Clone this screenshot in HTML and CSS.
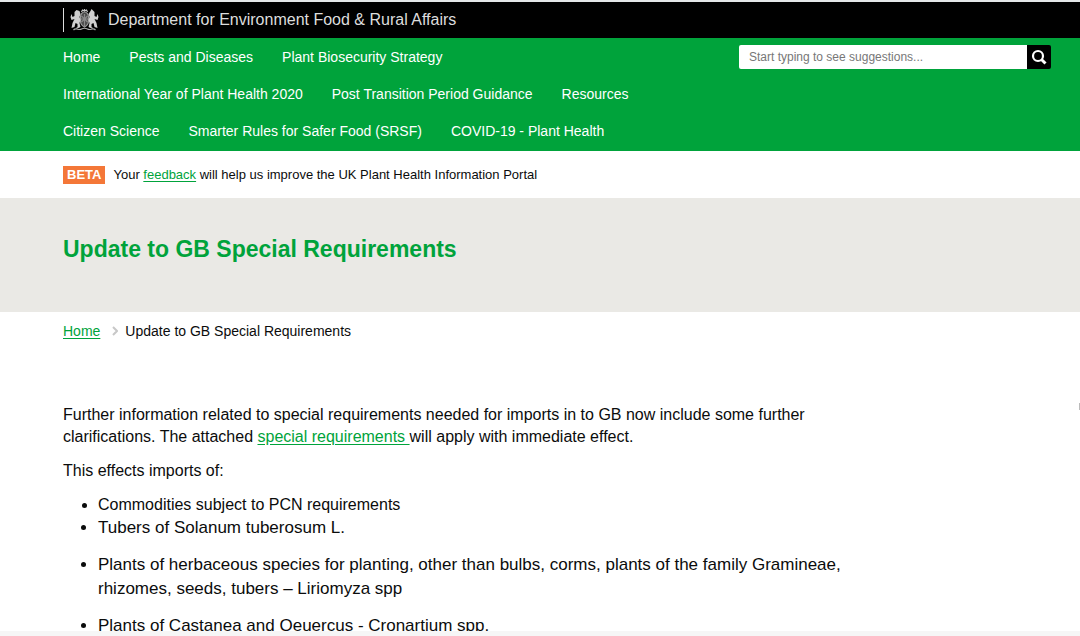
FILE: index.html
```html
<!DOCTYPE html>
<html lang="en">
<head>
    <meta charset="UTF-8">
    <meta name="viewport" content="width=device-width, initial-scale=1.0">
    <title>Update to GB Special Requirements - UK Plant Health Information Portal</title>
    <link rel="stylesheet" href="styles.css">
</head>
<body>

    <header>
        <div class="topbar">
            <svg class="crest" viewBox="0 0 28 24" aria-hidden="true">
                <g fill="none" stroke="#c4c4c4" stroke-width="1.2">
                    <path d="M10 9c0-3 2-5 4-5s4 2 4 5v4c0 3-2 5-4 6-2-1-4-3-4-6z" fill="#4a4a4a" stroke="#999"/>
                    <path d="M10 11h8M14 6v12M11 8l6 6M17 8l-6 6" stroke="#888"/>
                    <path d="M11 4l1-2 2 1 2-1 1 2M14 1v2"/>
                    <path d="M3 22c3-3 5 1 8-1 2-1 4-1 6 0 3 2 5-2 8 1M9 19l-3 1M19 19l3 1" stroke="#aaa"/>
                </g>
                <path d="M4 4l2-2 3 1 1 3-1 3 1 3-1 3 1 4-3 1v-4l-2-1-1 4-3 1 1-5 2-4-3 1-1-3 1-3 1 3 2-1z" fill="#d0d0d0"/>
                <path d="M24 4l-2-2-1-1-1 2-2 3 1 3-1 3 1 3-1 4 3 1v-4l2-1 1 4 3 1-1-5-2-4 3 1 1-3-1-3-1 3-2-1z" fill="#d0d0d0"/>
            </svg>
            <span class="department">Department for Environment Food &amp; Rural Affairs</span>
        </div>
        <div class="menu">
            <nav>
                <a href="#">Home</a>
                <a href="#">Pests and Diseases</a>
                <a href="#">Plant Biosecurity Strategy</a>
                <a href="#">International Year of Plant Health 2020</a>
                <a href="#">Post Transition Period Guidance</a>
                <a href="#">Resources</a>
                <a href="#">Citizen Science</a>
                <a href="#">Smarter Rules for Safer Food (SRSF)</a>
                <a href="#">COVID-19 - Plant Health</a>
            </nav>
            <form class="search">
                <input type="text" name="search" aria-label="Search" placeholder="Start typing to see suggestions...">
                <button type="submit" aria-label="Search">
                    <svg viewBox="0 0 18 18" aria-hidden="true">
                        <circle cx="8" cy="8" r="5" fill="none" stroke="#fff" stroke-width="2.2"/>
                        <path d="M11.5 11.5l4 4" stroke="#fff" stroke-width="3"/>
                    </svg>
                </button>
            </form>
        </div>
    </header>

    <div class="beta">
        <strong>BETA</strong>
        <span>Your <a href="#">feedback</a> will help us improve the UK Plant Health Information Portal</span>
    </div>

    <div class="banner">
        <h1>Update to GB Special Requirements</h1>
    </div>

    <main>
        <div class="breadcrumb">
            <a href="#">Home</a>
            <svg viewBox="0 0 6 10" aria-hidden="true">
                <path d="M1 1l4 4-4 4" fill="none" stroke="#c8c8c8" stroke-width="2"/>
            </svg>
            <span>Update to GB Special Requirements</span>
        </div>

        <div class="content">
            <p>Further information related to special requirements needed for imports in to GB now include some further clarifications. The attached <a href="#">special requirements </a>will apply with immediate effect.</p>
            <p>This effects imports of:</p>
            <ul>
                <li>Commodities subject to PCN requirements</li>
                <li class="large">Tubers of Solanum tuberosum L.</li>
                <li class="large spaced">Plants of herbaceous species for planting, other than bulbs, corms, plants of the family Gramineae, rhizomes, seeds, tubers – Liriomyza spp</li>
                <li class="large spaced">Plants of Castanea and Qeuercus - Cronartium spp.</li>
            </ul>
        </div>
    </main>

    <footer></footer>
    <div class="side-tab"></div>

</body>
</html>
```

FILE: styles.css
```css
* {
    box-sizing: border-box;
}
body {
    display: flex;
    flex-direction: column;
    height: 100vh;
    margin: 0;
    border-top: 2px solid #e4e7e9;
    font-family: "Liberation Sans", Arial, sans-serif;
    font-size: 14px;
    color: #0b0c0c;
    background-color: #fff;
    overflow: hidden;
}
a {
    color: #00a33b;
    text-underline-offset: 2px;
}
.topbar {
    display: flex;
    align-items: center;
    height: 36px;
    padding-left: 63px;
    background-color: #000;
}
.crest {
    width: 36px;
    height: 24px;
    padding-left: 6px;
    border-left: 1px solid #ddd;
}
.department {
    margin-left: 9px;
    font-size: 16px;
    line-height: 20px;
    padding-bottom: 1px;
    color: #ddd;
}
.menu {
    display: flex;
    justify-content: space-between;
    align-items: flex-start;
    padding: 1px 29px 1px 63px;
    background-color: #00a33b;
}
nav {
    display: flex;
    flex-wrap: wrap;
    column-gap: 29px;
    max-width: 620px;
}
nav a {
    line-height: 37px;
    color: #fff;
    text-decoration: none;
}
.search {
    display: flex;
    width: 312px;
    height: 24px;
    margin-top: 6px;
}
.search input {
    flex: 1;
    min-width: 0;
    padding: 0 10px;
    border: none;
    border-radius: 2px 0 0 2px;
    font-family: inherit;
    font-size: 12px;
}
.search input::placeholder {
    color: #777;
}
.search button {
    width: 24px;
    padding: 3px;
    border: none;
    border-radius: 0 2px 2px 0;
    background-color: #000;
    cursor: pointer;
}
.search svg {
    display: block;
}
.beta {
    display: flex;
    align-items: center;
    gap: 8px;
    padding: 15px 63px 14px;
    font-size: 13px;
    line-height: 18px;
}
.beta strong {
    padding: 0 4px;
    color: #fff;
    background-color: #f47738;
}
.banner {
    padding: 36px 63px 48px;
    background-color: #eae9e5;
}
h1 {
    margin: 0;
    font-size: 23px;
    line-height: 30px;
    color: #00a33b;
}
main {
    flex: 1;
    min-height: 0;
    padding: 9px 63px 0;
    overflow: hidden;
}
.breadcrumb {
    display: flex;
    align-items: center;
    line-height: 20px;
}
.breadcrumb svg {
    width: 6px;
    height: 10px;
    margin: 0 7px 0 12px;
}
.content {
    max-width: 810px;
    margin-top: 63px;
    font-size: 16px;
    line-height: 22px;
}
p {
    margin: 0 0 12px;
}
ul {
    margin: 0;
    padding-left: 35px;
}
li.large {
    font-size: 17px;
    line-height: 24px;
}
li.spaced {
    margin-top: 13px;
}
footer {
    height: 5px;
    background-color: #f6f6f6;
}
.side-tab {
    position: absolute;
    top: 403px;
    right: 0;
    width: 1px;
    height: 7px;
    background-color: #bbb;
}
```
